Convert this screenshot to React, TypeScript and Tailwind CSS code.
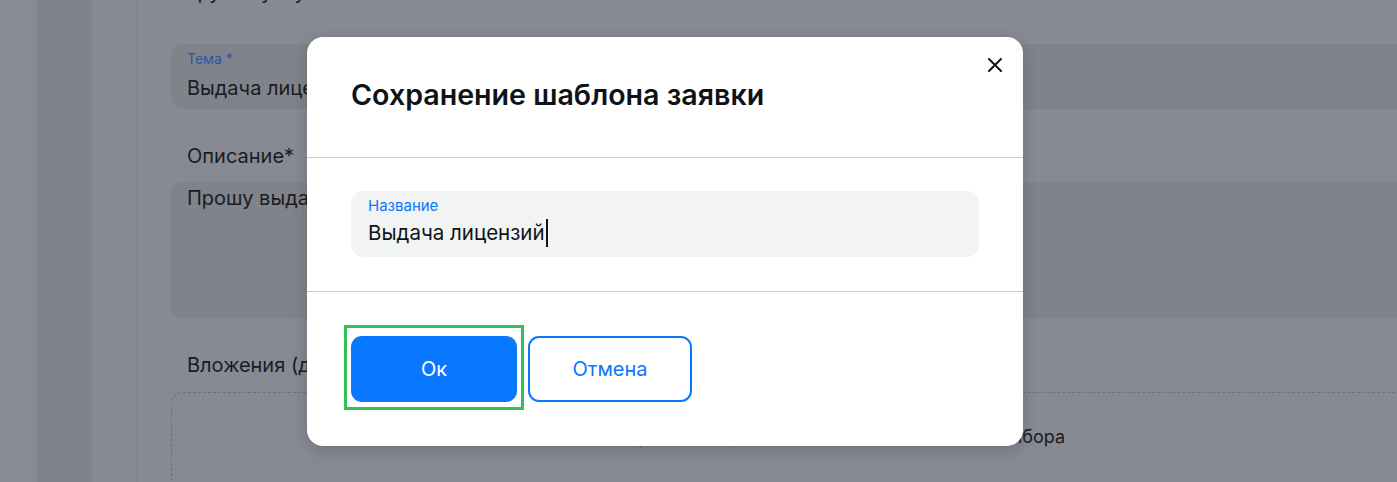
import React from "react";

export default function App() {
  const font = { fontFamily: "Inter, 'Noto Sans', sans-serif" };
  return (
    <div
      className="relative w-[1397px] h-[482px] overflow-hidden bg-[#878a93] flex"
      style={font}
    >
      {/* sidebar strips */}
      <div className="w-[37px] shrink-0 bg-[#888b94]" />
      <div className="w-[55px] shrink-0 bg-[#80838b]" />
      <div className="w-[45px] shrink-0 bg-[#878a93] border-r border-[#80838b]" />

      {/* main content (behind overlay) */}
      <div className="flex-1 pl-[34px] mr-[-24px] relative">
        <div className="absolute top-[-22px] left-[50px] text-[20px] leading-[28px] text-[#1a1c21]">Группа услуг</div>
        <div className="mt-[44px] h-[65px] rounded-[12px] bg-[#80838b] pl-[16px] pt-[6px]">
          <div className="text-[14px] leading-[18px] text-[#2556ad]">Тема *</div>
          <div className="text-[20px] leading-[28px] mt-[6px] text-[#1a1c21]">Выдача лицензий на программное обеспечение</div>
        </div>
        <div className="mt-[33px] pl-[16px] text-[20px] leading-[28px] text-[#1a1c21]">Описание*</div>
        <div className="mt-[12px] h-[137px] rounded-[12px] bg-[#80838b] pl-[16px] pt-[2px]">
          <div className="text-[20px] leading-[28px] text-[#1a1c21]">Прошу выдать лицензии для новых сотрудников</div>
        </div>
        <div className="mt-[32px] pl-[16px] text-[20px] leading-[28px] text-[#1a1c21]">Вложения (до 10 файлов)</div>
        <div className="mt-[13px] h-[140px] rounded-[12px] border border-dashed border-[#6d7078] flex justify-end pr-[355px] pt-[31px]">
          <div className="text-[18px] leading-[26px] text-[#1a1c21]">Перетащите файлы сюда или нажмите для выбора</div>
        </div>
      </div>

      {/* modal */}
      <div className="absolute left-[307px] top-[37px] w-[716px] h-[409px] bg-white rounded-[16px] shadow-[0_4px_16px_rgba(0,0,0,0.18)] flex flex-col">
        <button className="absolute left-[681px] top-[21px] w-[14px] h-[14px] flex items-center justify-center">
          <svg width="14" height="14" viewBox="0 0 14 14" fill="none">
            <path d="M1 1L13 13M13 1L1 13" stroke="#101319" strokeWidth="2" strokeLinecap="round" />
          </svg>
        </button>
        <div className="h-[121px] px-[44px] pt-[40px] border-b border-[#c9c9cd]">
          <div className="text-[28.6px] leading-[36px] font-semibold text-[#0f1217]">
            Сохранение шаблона заявки
          </div>
        </div>
        <div className="h-[134px] px-[44px] pt-[33px] border-b border-[#c9c9cd]">
          <div className="h-[66px] rounded-[12px] bg-[#f2f3f3] pl-[17px] pt-[6px]">
            <div className="text-[15px] leading-[18px] text-[#0a77ff]">Название</div>
            <div className="flex items-center mt-[4px] h-[28px]">
              <span className="text-[20.5px] leading-[28px] text-[#101319]">Выдача лицензий</span>
              <span className="w-[2px] h-[28px] bg-[#101319] ml-[1px]" />
            </div>
          </div>
        </div>
        <div className="flex gap-[11px] px-[44px] pt-[44px]">
          <div className="relative">
            <div className="absolute left-[-7px] top-[-11px] w-[180px] h-[85px] border-[3px] border-[#2fc25b]" />
            <button className="relative w-[166px] h-[66px] rounded-[11px] bg-[#0a77ff] text-white text-[20px]">
              Ок
            </button>
          </div>
          <button className="w-[164px] h-[66px] rounded-[11px] border-2 border-[#0a77ff] bg-white text-[#0a77ff] text-[20px]">
            Отмена
          </button>
        </div>
      </div>
    </div>
  );
}
